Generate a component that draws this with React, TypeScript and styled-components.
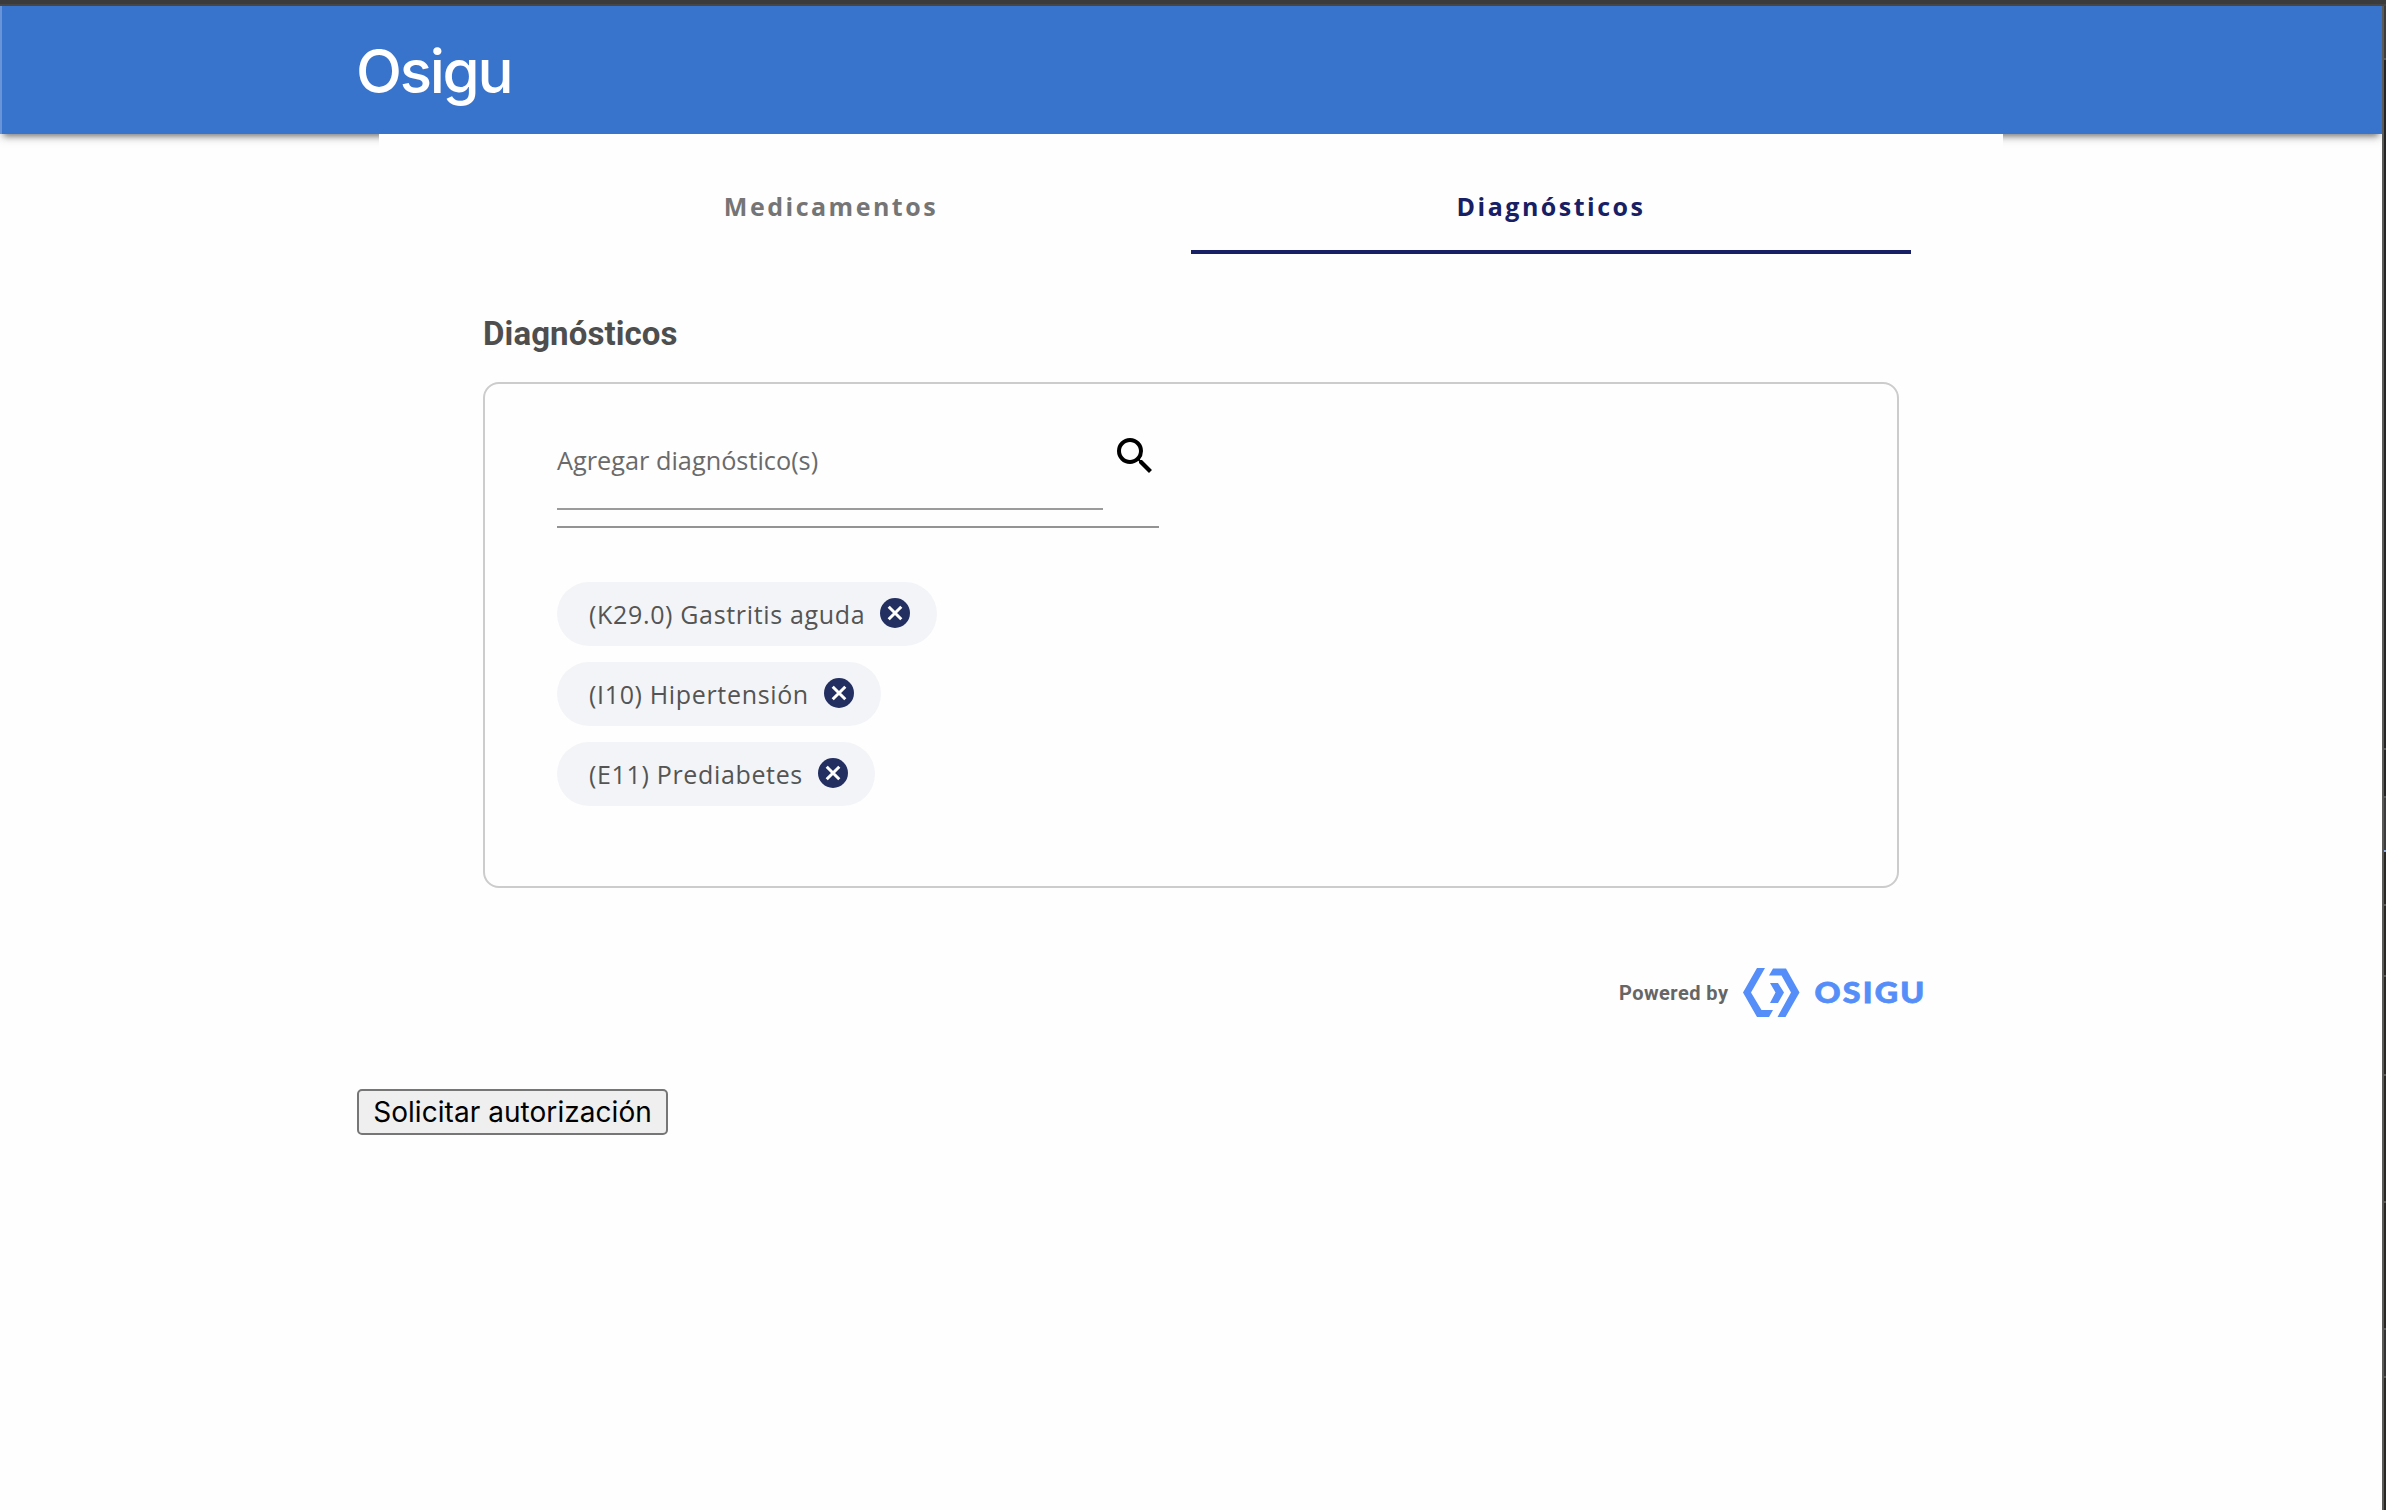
import React from "react";
import styled, { createGlobalStyle } from "styled-components";

const Global = createGlobalStyle`
  html, body { margin: 0; padding: 0; background: #fefefe; }
  * { box-sizing: border-box; }
`;

const Frame = styled.div`
  width: 2386px;
  height: 1510px;
  overflow: hidden;
  display: flex;
  flex-direction: column;
`;
const TopEdge = styled.div`
  height: 6px;
  flex: none;
  background: #3b3b3b;
  border-bottom: 2px solid #464646;
`;
const Body = styled.div`
  flex: 1;
  min-height: 0;
  display: flex;
`;
const Page = styled.div`
  flex: 1;
  height: 1504px;
  overflow: hidden;
  display: flex;
  flex-direction: column;
  background: #fefefe;
`;
const SideEdge = styled.div`
  width: 4px;
  height: 1504px;
  border-left: 2px solid #5b5b5a;
  display: flex;
  flex-direction: column;
`;
const EdgeCell = styled.div<{ $h: number; $c: string; $line?: string }>`
  height: ${(p) => p.$h}px;
  flex: none;
  background: ${(p) => p.$c};
  border-bottom: 2px solid ${(p) => p.$line ?? "#5a5a58"};
`;

const Header = styled.header`
  height: 128px;
  flex: none;
  padding-left: 354px;
  display: flex;
  align-items: center;
  background: #3873cc;
  border-left: 2px solid #6a94d8;
  box-shadow: 0 6px 6px -4px rgba(0, 0, 0, 0.45), 0 4px 10px rgba(0, 0, 0, 0.15);
`;
const Brand = styled.h1`
  margin: 0;
  padding-top: 1px;
  font: 450 60px/72px Inter, sans-serif;
  letter-spacing: -2.3px;
  color: #fff;
`;

const Container = styled.main`
  position: relative;
  width: 1624px;
  margin-left: 379px;
  padding: 0 92px;
  flex: none;
  background: #fefefe;
`;
const Tabs = styled.nav`
  display: flex;
  height: 120px;
`;
const Tab = styled.button<{ $active?: boolean }>`
  width: 720px;
  padding: 28px 0 0;
  border: 0;
  border-bottom: 4px solid ${(p) => (p.$active ? "#172064" : "transparent")};
  background: none;
  color: ${(p) => (p.$active ? "#172064" : "#757575")};
  font: 700 25px/34px "Open Sans", sans-serif;
  letter-spacing: 2.5px;
`;
const Title = styled.h2`
  margin: 60px 0 0 12px;
  font: 700 33px/40px Roboto, sans-serif;
  letter-spacing: 0.1px;
  color: #4e4e4e;
`;
const Card = styled.section`
  width: 1416px;
  height: 506px;
  margin: 28px 0 0 12px;
  padding: 40px 72px;
  border: 2px solid #ccc;
  border-radius: 16px;
`;
const SearchField = styled.div`
  width: 602px;
  height: 104px;
  display: flex;
  justify-content: space-between;
  border-bottom: 2px solid #939393;
`;
const SearchInput = styled.div`
  width: 546px;
  height: 86px;
  padding-top: 18px;
  border-bottom: 2px solid #9b9b9b;
  font: 400 25.3px/36px "Open Sans", sans-serif;
  color: #6a6a6a;
`;
const SearchIcon = styled.svg`
  width: 48px;
  height: 48px;
  margin-top: 8px;
`;
const ChipList = styled.div`
  margin-top: 54px;
  display: flex;
  flex-direction: column;
  align-items: flex-start;
  gap: 16px;
`;
const Chip = styled.div`
  height: 64px;
  padding: 0 24px 0 32px;
  display: flex;
  align-items: center;
  border-radius: 32px;
  background: #f3f4f7;
  font: 400 25px/36px "Open Sans", sans-serif;
  letter-spacing: 0.66px;
  color: #545454;
`;
const RemoveIcon = styled.svg`
  width: 36px;
  height: 36px;
  margin: -2px 0 0 12px;
`;

const Powered = styled.footer`
  height: 50px;
  margin-top: 80px;
  padding-left: 1148px;
  display: flex;
  align-items: center;
  font: 700 20px/24px Roboto, sans-serif;
  letter-spacing: 0.45px;
  color: #666;
`;
const PoweredLabel = styled.span`
  width: 124px;
  flex: none;
  white-space: nowrap;
`;
const Logo = styled.svg`
  width: 184px;
  height: 50px;
  flex: none;
`;
const LogoText = styled.text`
  font: 900 29px Lato, sans-serif;
  letter-spacing: 2px;
  stroke: #558ef8;
  stroke-width: 0.8px;
`;
const Submit = styled.button`
  width: 311px;
  height: 46px;
  flex: none;
  margin: 71px 0 0 357px;
  padding: 0;
  border: 2px solid #767676;
  border-radius: 5px;
  background: #efefef;
  color: #000;
  font: 400 28px/40px Inter, sans-serif;
  letter-spacing: 0.05px;
`;

const diagnoses = ["(K29.0) Gastritis aguda", "(I10) Hipertensión", "(E11) Prediabetes"];

export default function App() {
  return (
    <>
      <Global />
      <Frame>
        <TopEdge />
        <Body>
          <Page>
            <Header>
              <Brand>Osigu</Brand>
            </Header>
            <Container>
              <Tabs>
                <Tab>Medicamentos</Tab>
                <Tab $active>Diagnósticos</Tab>
              </Tabs>
              <Title>Diagnósticos</Title>
              <Card>
                <SearchField>
                  <SearchInput>Agregar diagnóstico(s)</SearchInput>
                  <SearchIcon viewBox="0 0 24 24">
                    <path d="M15.5 14h-.79l-.28-.27A6.47 6.47 0 0 0 16 9.5 6.5 6.5 0 1 0 9.5 16c1.61 0 3.09-.59 4.23-1.57l.27.28v.79l5 4.99L20.49 19l-4.99-5zm-6 0C7.01 14 5 11.99 5 9.5S7.01 5 9.5 5 14 7.01 14 9.5 11.99 14 9.5 14z" />
                  </SearchIcon>
                </SearchField>
                <ChipList>
                  {diagnoses.map((d) => (
                    <Chip key={d}>
                      {d}
                      <RemoveIcon viewBox="0 0 24 24">
                        <circle cx="12" cy="12" r="10" fill="#232f60" />
                        <path d="M7.8 7.8l8.4 8.4M16.2 7.8l-8.4 8.4" stroke="#fff" strokeWidth="2" />
                      </RemoveIcon>
                    </Chip>
                  ))}
                </ChipList>
              </Card>
              <Powered>
                <PoweredLabel>Powered by</PoweredLabel>
                <Logo viewBox="0 0 184 50" fill="#558ef8">
                  <path d="M14 0h8L8 24.5 18.5 42H30l-4 7H14L0 24.5z" />
                  <path d="M30 0.5h13L56.5 24.5 42.5 49h-8L48 24.5 38.5 7.5H26z" />
                  <path d="M27 15h8l6 9.5-6 10.5h-8l5.5-10.5z" />
                  <LogoText x="71.5" y="35" textLength="112" lengthAdjust="spacingAndGlyphs">OSIGU</LogoText>
                </Logo>
              </Powered>
            </Container>
            <Submit>Solicitar autorización</Submit>
          </Page>
          <SideEdge>
            <EdgeCell $h={54} $c="#3c3c3c" />
            <EdgeCell $h={690} $c="#242424" />
            <EdgeCell $h={48} $c="#242424" />
            <EdgeCell $h={54} $c="#3c3c3c" $line="#8fb0e8" />
            <EdgeCell $h={54} $c="#282724" />
            <EdgeCell $h={71} $c="#282724" />
            <EdgeCell $h={99} $c="#282724" />
            <EdgeCell $h={127} $c="#282724" />
            <EdgeCell $h={127} $c="#282724" />
            <EdgeCell $h={48} $c="#333" />
            <EdgeCell $h={140} $c="#282724" />
          </SideEdge>
        </Body>
      </Frame>
    </>
  );
}
